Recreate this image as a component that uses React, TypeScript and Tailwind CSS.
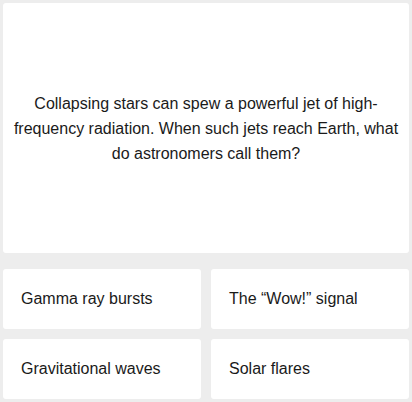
import React from "react";

const answers = ["Gamma ray bursts", "The \u201cWow!\u201d signal", "Gravitational waves", "Solar flares"];

export default function App() {
  return (
    <div
      className="w-[412px] h-[402px] bg-[#ededed] p-[3px] flex flex-col text-[#1a1a1a]"
      style={{ fontFamily: '"Liberation Sans", Arial, sans-serif' }}
    >
      <div className="h-[250px] bg-white rounded-[3px] flex items-center justify-center px-[6px]">
        <p className="text-center text-[16px] leading-[25px]">
          Collapsing stars can spew a powerful jet of high-frequency radiation. When such jets reach Earth, what do astronomers call them?
        </p>
      </div>
      <div className="mt-[16px] grid grid-cols-2 gap-[10px]">
        {answers.map((a) => (
          <div key={a} className="h-[60px] bg-white rounded-[3px] flex items-center pl-[18px] text-[16px]">
            {a}
          </div>
        ))}
      </div>
    </div>
  );
}
